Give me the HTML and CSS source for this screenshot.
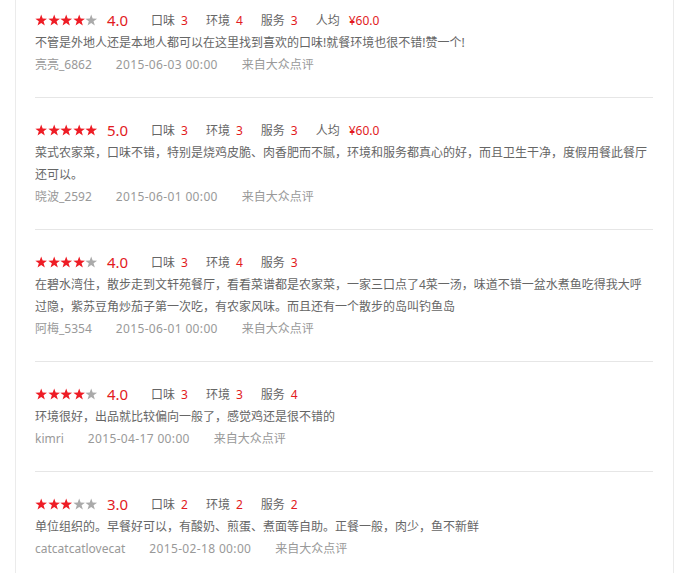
FILE: index.html
```html
<!DOCTYPE html>
<html lang="zh-CN">
<head>
<meta charset="utf-8">
<link rel="stylesheet" href="styles.css">
</head>
<body>
<svg class="defs" width="0" height="0" aria-hidden="true">
  <defs>
    <symbol id="star" viewBox="0 0 12 12">
      <polygon points="6,0.4 7.41,4.46 11.71,4.55 8.28,7.14 9.53,11.25 6,8.8 2.47,11.25 3.72,7.14 0.29,4.55 4.59,4.46"/>
    </symbol>
  </defs>
</svg>
<div class="panel">
  <ul class="reviews">
    <li class="review first">
      <div class="head">
        <span class="stars"><svg class="on"><use href="#star"/></svg><svg class="on"><use href="#star"/></svg><svg class="on"><use href="#star"/></svg><svg class="on"><use href="#star"/></svg><svg class="off"><use href="#star"/></svg></span>
        <span class="score">4.0</span>
        <span class="item">口味<em>3</em></span>
        <span class="item">环境<em>4</em></span>
        <span class="item">服务<em>3</em></span>
        <span class="item">人均<em class="price">¥60.0</em></span>
      </div>
      <p class="text">不管是外地人还是本地人都可以在这里找到喜欢的口味!就餐环境也很不错!赞一个!</p>
      <div class="meta"><span>亮亮_6862</span><span class="date">2015-06-03 00:00</span><span>来自大众点评</span></div>
    </li>
    <li class="review">
      <div class="head">
        <span class="stars"><svg class="on"><use href="#star"/></svg><svg class="on"><use href="#star"/></svg><svg class="on"><use href="#star"/></svg><svg class="on"><use href="#star"/></svg><svg class="on"><use href="#star"/></svg></span>
        <span class="score">5.0</span>
        <span class="item">口味<em>3</em></span>
        <span class="item">环境<em>3</em></span>
        <span class="item">服务<em>3</em></span>
        <span class="item">人均<em class="price">¥60.0</em></span>
      </div>
      <p class="text">菜式农家菜，口味不错，特别是烧鸡皮脆、肉香肥而不腻，环境和服务都真心的好，而且卫生干净，度假用餐此餐厅还可以。</p>
      <div class="meta"><span>晓波_2592</span><span class="date">2015-06-01 00:00</span><span>来自大众点评</span></div>
    </li>
    <li class="review">
      <div class="head">
        <span class="stars"><svg class="on"><use href="#star"/></svg><svg class="on"><use href="#star"/></svg><svg class="on"><use href="#star"/></svg><svg class="on"><use href="#star"/></svg><svg class="off"><use href="#star"/></svg></span>
        <span class="score">4.0</span>
        <span class="item">口味<em>3</em></span>
        <span class="item">环境<em>4</em></span>
        <span class="item">服务<em>3</em></span>
      </div>
      <p class="text">在碧水湾住，散步走到文轩苑餐厅，看看菜谱都是农家菜，一家三口点了4菜一汤，味道不错一盆水煮鱼吃得我大呼过隐，紫苏豆角炒茄子第一次吃，有农家风味。而且还有一个散步的岛叫钓鱼岛</p>
      <div class="meta"><span>阿梅_5354</span><span class="date">2015-06-01 00:00</span><span>来自大众点评</span></div>
    </li>
    <li class="review">
      <div class="head">
        <span class="stars"><svg class="on"><use href="#star"/></svg><svg class="on"><use href="#star"/></svg><svg class="on"><use href="#star"/></svg><svg class="on"><use href="#star"/></svg><svg class="off"><use href="#star"/></svg></span>
        <span class="score">4.0</span>
        <span class="item">口味<em>3</em></span>
        <span class="item">环境<em>3</em></span>
        <span class="item">服务<em>4</em></span>
      </div>
      <p class="text">环境很好，出品就比较偏向一般了，感觉鸡还是很不错的</p>
      <div class="meta"><span>kimri</span><span class="date">2015-04-17 00:00</span><span>来自大众点评</span></div>
    </li>
    <li class="review">
      <div class="head">
        <span class="stars"><svg class="on"><use href="#star"/></svg><svg class="on"><use href="#star"/></svg><svg class="on"><use href="#star"/></svg><svg class="off"><use href="#star"/></svg><svg class="off"><use href="#star"/></svg></span>
        <span class="score">3.0</span>
        <span class="item">口味<em>2</em></span>
        <span class="item">环境<em>2</em></span>
        <span class="item">服务<em>2</em></span>
      </div>
      <p class="text">单位组织的。早餐好可以，有酸奶、煎蛋、煮面等自助。正餐一般，肉少，鱼不新鲜</p>
      <div class="meta"><span>catcatcatlovecat</span><span class="date">2015-02-18 00:00</span><span>来自大众点评</span></div>
    </li>
  </ul>
</div>
</body>
</html>
```

FILE: styles.css
```css
html, body {
  margin: 0;
  padding: 0;
  background: #fff;
}
body {
  font-family: "Noto Sans", "Noto Sans CJK SC", sans-serif;
  font-size: 12px;
  color: #666;
}
.defs {
  position: absolute;
  width: 0;
  height: 0;
}
.panel {
  margin-left: 15px;
  width: 657px;
  min-height: 573px;
  border-left: 1px solid #ebebeb;
  border-right: 1px solid #ebebeb;
}
.reviews {
  list-style: none;
  margin: 0;
  padding: 0 20px 0 19px;
}
.review {
  padding: 20px 0 21px;
  border-bottom: 1px solid #e6e6e6;
}
.review.first {
  padding-top: 8px;
}
.head {
  display: flex;
  align-items: center;
  height: 24px;
}
.stars {
  display: flex;
  width: 63px;
  margin-right: 9px;
}
.stars svg {
  width: 12.4px;
  height: 12.4px;
  margin-right: 0.2px;
  flex: none;
}
.stars .on { fill: #ee1c25; }
.stars .off { fill: #aaaaaa; }
.score {
  color: #e21a22;
  font-size: 15px;
  margin-right: 22px;
  width: 22px;
}
.item {
  color: #666;
  margin-right: 18px;
}
.item em {
  font-style: normal;
  color: #e21a22;
  margin-left: 6px;
}
.item .price {
  margin-left: 9px;
}
.text {
  margin: 0;
  line-height: 22px;
  color: #666;
}
.meta {
  display: flex;
  line-height: 22px;
  color: #999;
}
.meta span {
  margin-right: 24px;
}
.meta .date {
  letter-spacing: 0.35px;
}
```
